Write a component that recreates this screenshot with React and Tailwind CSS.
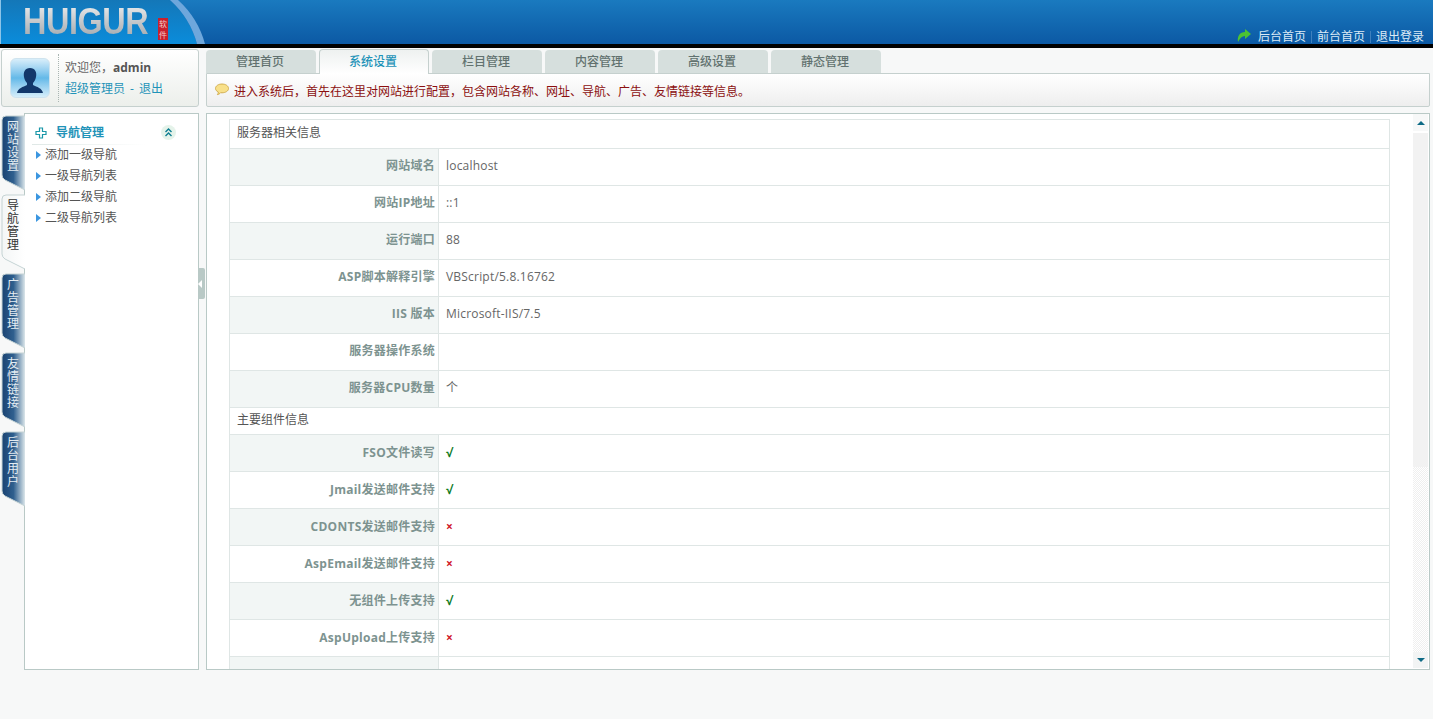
import React from 'react';

const font = { fontFamily: '"Open Sans", "Noto Sans CJK SC", sans-serif' };

const sideTabs = [
  { name: '网站设置' },
  { name: '导航管理', active: true },
  { name: '广告管理' },
  { name: '友情链接' },
  { name: '后台用户' },
];

const topTabs = ['管理首页', '系统设置', '栏目管理', '内容管理', '高级设置', '静态管理'];

const navItems = ['添加一级导航', '一级导航列表', '添加二级导航', '二级导航列表'];

const serverRows = [
  { label: '网站域名', value: 'localhost', shade: true },
  { label: '网站IP地址', value: '::1' },
  { label: '运行端口', value: '88', shade: true },
  { label: 'ASP脚本解释引擎', value: 'VBScript/5.8.16762' },
  { label: 'IIS 版本', value: 'Microsoft-IIS/7.5', shade: true },
  { label: '服务器操作系统', value: '' },
  { label: '服务器CPU数量', value: '个', shade: true },
];

const partRows = [
  { label: 'FSO文件读写', ok: true, shade: true },
  { label: 'Jmail发送邮件支持', ok: true },
  { label: 'CDONTS发送邮件支持', ok: false, shade: true },
  { label: 'AspEmail发送邮件支持', ok: false },
  { label: '无组件上传支持', ok: true, shade: true },
  { label: 'AspUpload上传支持', ok: false },
];

const SideTab = ({ tab }) => {
  const gid = tab.active ? 'tabActive' : 'tabDark';
  return (
    <div className={`relative h-[76px] w-[24px] ${tab.active ? 'z-10' : ''}`}>
      <svg className="absolute left-0 top-0" width="24" height="76" viewBox="0 0 24 76">
        <defs>
          <linearGradient id="tabDark" x1="0" x2="1" y1="0" y2="0">
            <stop offset="0" stopColor="#1a4372" />
            <stop offset="0.5" stopColor="#2f5f8e" />
            <stop offset="1" stopColor="#dbe6ea" />
          </linearGradient>
          <linearGradient id="tabActive" x1="0" x2="1" y1="0" y2="0">
            <stop offset="0" stopColor="#f4f6f6" />
            <stop offset="1" stopColor="#ffffff" />
          </linearGradient>
        </defs>
        <path
          d="M24 1 L5 1 Q1 1 1 5 L1 60 Q1 63 4 65 L24 75"
          fill={`url(#${gid})`}
          stroke="#c5d3d4"
          strokeWidth="1"
        />
      </svg>
      <div
        className={`relative ml-[6px] w-[13px] pt-[5px] text-[12px] leading-[13px] ${
          tab.active ? 'text-[#333333]' : 'text-[#e4edf3]'
        }`}
      >
        {tab.name}
      </div>
    </div>
  );
};

const Row = ({ label, shade, low, children }) => (
  <div className={`flex h-[37px] border-b border-[#dfe6e5] ${low ? 'leading-[36px]' : 'leading-[34px]'}`}>
    <div
      className={`w-[209px] shrink-0 border-r border-[#dfe6e5] pr-[3px] text-right text-[12px] font-bold tracking-[0.25px] text-[#7d9390] ${
        shade ? 'bg-[#f2f6f5]' : 'bg-white'
      }`}
    >
      {label}
    </div>
    <div className="pl-[7px] text-[12px] tracking-[0.2px] text-[#666666]">{children}</div>
  </div>
);

const TitleRow = ({ children, h }) => (
  <div className={`border-b border-[#dfe6e5] pl-[7px] text-[12px] text-[#555555] ${h}`}>{children}</div>
);

export default function App() {
  return (
    <div className="h-[719px] w-[1433px] overflow-hidden bg-[#f7f8f8]" style={font}>
      {/* header */}
      <div className="relative h-[44px] bg-gradient-to-b from-[#1a7abf] to-[#0c59a4]">
        <svg className="absolute left-0 top-0" width="210" height="44" viewBox="0 0 210 44">
          <defs>
            <linearGradient id="hdLeft" x1="0" x2="0" y1="0" y2="1">
              <stop offset="0" stopColor="#1477b8" />
              <stop offset="1" stopColor="#0a8cdb" />
            </linearGradient>
          </defs>
          <path d="M0 0 H170 Q190 18 197 44 H0 Z" fill="url(#hdLeft)" />
          <path d="M170 0 H178 Q198 18 205 44 H197 Q190 18 170 0 Z" fill="#6ea7dc" />
          <path d="M0.5 0 V44" stroke="#8cc4e8" strokeWidth="1" />
        </svg>
        <div className="relative flex h-full items-start pl-[23px] pt-[2px]">
          <div className="w-[135px] shrink-0">
            <div
              className="w-max origin-left scale-x-[0.9] bg-gradient-to-b from-[#eff0f1] via-[#c4c7ca] to-[#9aa2a8] bg-clip-text text-[36px] font-bold leading-[40px] tracking-[-0.5px] text-transparent"
              style={{ fontFamily: '"Liberation Sans", sans-serif' }}
            >
              HUIGUR
            </div>
          </div>
          <div className="mt-[16px] h-[22px] w-[10px] bg-[#c8202c] text-center text-[8px] leading-[11px] text-[#f3c8c8]">
            软件
          </div>
        </div>
        <div className="absolute bottom-0 right-[9px] flex items-center text-[12px] leading-[15px] text-[#dcebf6]">
          <svg className="mr-[7px] -translate-y-[1px]" width="14" height="13" viewBox="0 0 14 13">
            <path d="M8 0 L14 5 L8 10 V7 C5 7 3 9 1 13 C0 7 3 3 8 3 Z" fill="#4cc332" />
          </svg>
          <span>后台首页</span>
          <span className="mx-[5px] h-[12px] w-px bg-[#3f80bd]" />
          <span>前台首页</span>
          <span className="mx-[5px] h-[12px] w-px bg-[#3f80bd]" />
          <span>退出登录</span>
        </div>
      </div>
      <div className="h-[4px] bg-black" />

      <div className="flex pl-[1px] pr-[3px] pt-[1px]">
        {/* left column */}
        <div className="w-[198px] shrink-0">
          <div className="flex h-[58px] items-stretch rounded-[3px] border border-[#c5d0ce] bg-gradient-to-b from-white to-[#ecefeb] py-[4px] pl-[8px]">
            <div className="mt-[4px] flex h-[40px] w-[40px] items-end justify-center overflow-hidden rounded-[6px] border border-[#cfe3ee] bg-gradient-to-b from-[#d8eefa] via-[#63b9e8] to-[#d5eefa]">
              <svg width="30" height="32" viewBox="0 0 30 32">
                <path
                  d="M15 3 C20 3 22 7 21 12 C20.5 15 19 17 18 18 L18 20 C22 22 27 23 28 28 H2 C3 23 8 22 12 20 L12 18 C11 17 9.5 15 9 12 C8 7 10 3 15 3 Z"
                  fill="#12386b"
                />
              </svg>
            </div>
            <div className="ml-[8px] border-l border-dotted border-[#a9b5b2] pl-[6px] text-[12px]">
              <div className="mt-[3px] leading-[21px] text-[#666666]">
                欢迎您，<span className="font-bold text-[#555555]">admin</span>
              </div>
              <div className="leading-[21px] text-[#1f93b8]">
                超级管理员<span className="mx-[5px]">-</span>退出
              </div>
            </div>
          </div>

          <div className="mt-[6px] flex h-[557px]">
            <div className="flex w-[24px] shrink-0 flex-col gap-[3px] pt-[2px]">
              {sideTabs.map((t) => (
                <SideTab key={t.name} tab={t} />
              ))}
            </div>
            <div className="-ml-px w-[175px] border border-[#b9c9c6] bg-white pl-[7px] pt-[7px]">
              <div className="flex h-[23px] items-center pl-[3px]">
                <svg className="shrink-0" width="12" height="12" viewBox="0 0 12 12">
                  <path
                    d="M4.5 1 H7.5 V4.5 H11 V7.5 H7.5 V11 H4.5 V7.5 H1 V4.5 H4.5 Z"
                    fill="none"
                    stroke="#1a97a8"
                    strokeWidth="1.2"
                  />
                </svg>
                <span className="ml-[9px] shrink-0 text-[12px] font-bold text-[#1f93b8]">导航管理</span>
                <span className="ml-[57px] flex h-[15px] w-[15px] shrink-0 items-center justify-center rounded-full bg-[#e5f3ea]">
                  <svg width="9" height="9" viewBox="0 0 9 9">
                    <path d="M1.5 4 L4.5 1 L7.5 4 M1.5 8 L4.5 5 L7.5 8" fill="none" stroke="#0d7d90" strokeWidth="1.4" />
                  </svg>
                </span>
              </div>
              <div className="h-px w-[113px] bg-gradient-to-r from-[#dfe8e6] to-white" />
              <div className="-mt-px">
                {navItems.map((n) => (
                  <div key={n} className="flex h-[21px] items-center pl-[4px] text-[12px] text-[#555555]">
                    <span className="mr-[4px] h-0 w-0 border-y-[4px] border-l-[5px] border-y-transparent border-l-[#3b96e0]" />
                    {n}
                  </div>
                ))}
              </div>
            </div>
          </div>
        </div>

        {/* collapse handle */}
        <div className="-ml-px w-[8px] shrink-0 pt-[219px]">
          <div className="relative flex h-[31px] w-[7px] items-center rounded-r-[2px] bg-[#b9c9c6]">
            <span className="h-0 w-0 border-y-[4px] border-r-[4px] border-y-transparent border-r-white" />
          </div>
        </div>

        {/* right column */}
        <div className="min-w-0 flex-1">
          <div className="flex h-[24px] gap-[3px] pt-[1px]">
            {topTabs.map((t, i) =>
              i === 1 ? (
                <div
                  key={t}
                  className="relative z-10 -mt-[1px] h-[25px] w-[110px] rounded-t-[4px] border border-b-0 border-[#c5d0ce] bg-gradient-to-b from-[#eef1f0] to-white pr-[2px] text-center text-[12px] font-medium leading-[23px] text-[#1f93b8]"
                >
                  {t}
                </div>
              ) : (
                <div
                  key={t}
                  className="h-[23px] w-[110px] rounded-t-[4px] bg-[#d6dfdd] pr-[2px] text-center text-[12px] font-medium leading-[23px] text-[#62726f]"
                >
                  {t}
                </div>
              )
            )}
          </div>
          <div className="flex h-[34px] items-center rounded-b-[2px] border border-[#c5d0ce] bg-gradient-to-b from-white to-[#eeeeee] pl-[8px] text-[12px] text-[#8b0f0f]">
            <svg className="mr-[5px] -mt-[2px] shrink-0" width="14" height="13" viewBox="0 0 14 13">
              <path
                d="M7 1 C10.5 1 13.5 2.8 13.5 5.5 C13.5 8 10.5 9.8 7 9.8 C6.5 9.8 6 9.8 5.6 9.7 C4.8 10.8 3.5 11.5 2.4 11.6 C3 10.9 3.3 10 3.3 9 C1.6 8.2 0.5 7 0.5 5.5 C0.5 2.8 3.5 1 7 1 Z"
                fill="#f8e08a"
                stroke="#c9a13b"
                strokeWidth="0.8"
              />
            </svg>
            <span className="pt-[3px]">进入系统后，首先在这里对网站进行配置，包含网站各称、网址、导航、广告、友情链接等信息。</span>
          </div>

          <div className="mt-[6px] flex h-[557px] overflow-hidden border border-[#b9c9c6] bg-white pt-[5px]">
            <div className="ml-[22px] w-[1161px] shrink-0 self-stretch overflow-hidden border-x border-t border-[#dfe6e5]">
              <TitleRow h="h-[29px] leading-[25px]">服务器相关信息</TitleRow>
              {serverRows.map((r) => (
                <Row key={r.label} label={r.label} shade={r.shade}>
                  {r.value}
                </Row>
              ))}
              <TitleRow h="h-[27px] leading-[24px]">主要组件信息</TitleRow>
              {partRows.map((r) => (
                <Row key={r.label} label={r.label} shade={r.shade} low>
                  {r.ok ? (
                    <span className="font-bold text-[#0b7a1e]">√</span>
                  ) : (
                    <span className="font-bold text-[#d0192b]">×</span>
                  )}
                </Row>
              ))}
              <Row label="" shade>
                {''}
              </Row>
            </div>

            {/* scrollbar */}
            <div className="ml-[23px] -mt-[5px] flex w-[15px] shrink-0 flex-col pb-[1px]">
              <div className="flex h-[17px] items-center justify-center bg-[#f7f8f8]">
                <span className="h-0 w-0 border-x-[4px] border-b-[4px] border-x-transparent border-b-[#0d6a85]" />
              </div>
              <div className="mt-[2px] h-[334px] bg-[#f2f2f2]" />
              <div className="flex-1 bg-[repeating-conic-gradient(#efefef_0%_25%,#ffffff_0%_50%)] bg-[length:2px_2px]" />
              <div className="flex h-[16px] items-center justify-center bg-[#f2f4f4]">
                <span className="h-0 w-0 border-x-[4px] border-t-[4px] border-x-transparent border-t-[#0d6a85]" />
              </div>
            </div>
          </div>
        </div>
      </div>
    </div>
  );
}
